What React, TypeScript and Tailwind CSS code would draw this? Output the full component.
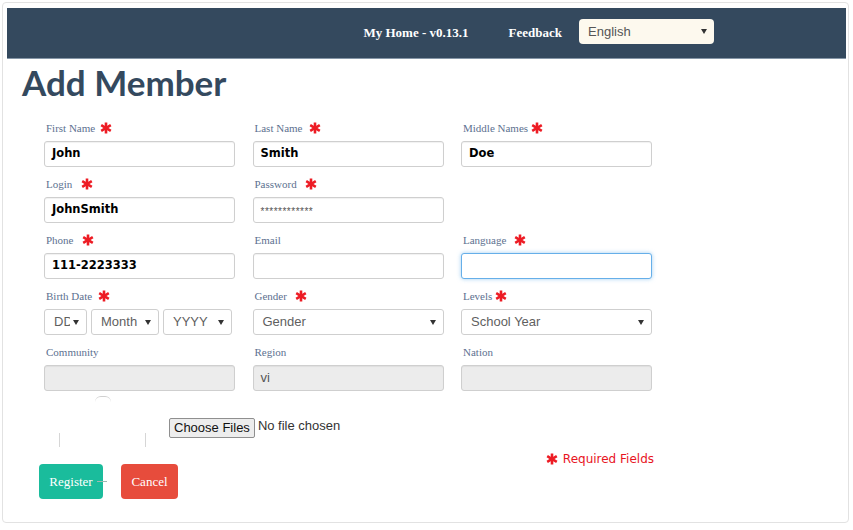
import React from 'react';

const serif = { fontFamily: '"Liberation Serif", serif' };

function Star({ className = '' }: { className?: string }) {
  return (
    <svg viewBox="0 0 12 12" className={`inline-block w-[12px] h-[12px] ${className}`}>
      <g stroke="#ed1c24" strokeWidth="2.6" strokeLinecap="butt">
        <line x1="6" y1="0.5" x2="6" y2="11.5" />
        <line x1="1.2" y1="3.2" x2="10.8" y2="8.8" />
        <line x1="1.2" y1="8.8" x2="10.8" y2="3.2" />
      </g>
    </svg>
  );
}

function Caret() {
  return (
    <svg viewBox="0 0 6 5" className="w-[6px] h-[5px] shrink-0">
      <path d="M0 0 L6 0 L3 5 Z" fill="#333" />
    </svg>
  );
}

function Label({ text, required, gap = 'ml-[5px]' }: { text: string; required?: boolean; gap?: string }) {
  return (
    <div className="h-[14px] mb-[6px] pl-[2px] flex items-center text-[11px] leading-[14px] text-[#5d7190]" style={serif}>
      <span>{text}</span>
      {required && <Star className={gap} />}
    </div>
  );
}

function TextBox({ value = '', bold = true, focused = false, disabled = false, small = false }: {
  value?: string; bold?: boolean; focused?: boolean; disabled?: boolean; small?: boolean;
}) {
  const border = focused
    ? 'border-[#66afe9] shadow-[0_0_4px_rgba(102,175,233,0.6)]'
    : 'border-[#cfcfcf] shadow-[inset_0_1px_1px_rgba(0,0,0,0.06)]';
  const bg = disabled ? 'bg-[#ececec]' : 'bg-white';
  const font = small
    ? 'text-[10px] text-[#555] tracking-[0.5px] pt-[1px] items-start'
    : bold
    ? 'text-[11.5px] font-bold text-black items-center'
    : 'text-[13px] text-[#555] items-center';
  return (
    <div
      className={`h-[26px] w-full rounded-[3px] border ${border} ${bg} px-[7px] flex ${font}`}
      style={{ fontFamily: bold && !small ? '"DejaVu Sans", sans-serif' : '"Liberation Sans", sans-serif' }}
    >
      {small ? <span className="mt-[5px]">{value}</span> : value}
    </div>
  );
}

function SelectBox({ value, width = 'w-full', clip }: { value: string; width?: string; clip?: string }) {
  return (
    <div
      className={`h-[26px] ${width} rounded-[3px] border border-[#cfcfcf] bg-white pl-[9px] pr-[7px] flex items-center justify-between text-[13px] text-[#5f5f5f]`}
      style={{ fontFamily: '"Liberation Sans", sans-serif' }}
    >
      <span className={clip ? `${clip} overflow-hidden whitespace-nowrap` : ''}>{value}</span>
      <Caret />
    </div>
  );
}

export default function App() {
  return (
    <div className="w-[853px] h-[530px] bg-white pt-[2px] pl-[2px]">
      <div className="w-[847px] h-[521px] border border-[#e2e2e2] rounded-[4px] pt-[5px] pl-[4px] pr-[2px]">
        {/* Header */}
        <div className="h-[51px] bg-[#34495e] border-b border-[#8596a7] flex items-center justify-end pr-[132px]">
          <span className="text-white font-bold text-[13px]" style={serif}>My Home - v0.13.1</span>
          <span className="text-white font-bold text-[13px] ml-[40px]" style={serif}>Feedback</span>
          <div
            className="ml-[17px] w-[135px] h-[25px] mb-[3px] rounded-[4px] bg-[#fdf9ee] flex items-center justify-between pl-[9px] pr-[7px] text-[13px] text-[#555]"
            style={{ fontFamily: '"Liberation Sans", sans-serif' }}
          >
            <span>English</span>
            <Caret />
          </div>
        </div>

        {/* Title */}
        <h1
          className="pl-[15px] mt-[3px] text-[35px] leading-[40px] font-bold text-[#34495e]"
          style={{ fontFamily: 'Lato, sans-serif' }}
        >
          Add Member
        </h1>

        {/* Form */}
        <div className="pl-[37px] mt-[19px]">
          <div className="grid grid-cols-[191px_191px_191px] gap-x-[17.5px] gap-y-[10px]">
            <div>
              <Label text="First Name" required />
              <TextBox value="John" />
            </div>
            <div>
              <Label text="Last Name" required gap="ml-[7px]" />
              <TextBox value="Smith" />
            </div>
            <div>
              <Label text="Middle Names" required gap="ml-[3px]" />
              <TextBox value="Doe" />
            </div>

            <div>
              <Label text="Login" required gap="ml-[9px]" />
              <TextBox value="JohnSmith" />
            </div>
            <div>
              <Label text="Password" required gap="ml-[8px]" />
              <TextBox value="************" small />
            </div>
            <div />

            <div>
              <Label text="Phone" required gap="ml-[8px]" />
              <TextBox value="111-2223333" />
            </div>
            <div>
              <Label text="Email" />
              <TextBox />
            </div>
            <div>
              <Label text="Language" required gap="ml-[8px]" />
              <TextBox focused />
            </div>

            <div>
              <Label text="Birth Date" required gap="ml-[6px]" />
              <div className="flex gap-[4px]">
                <SelectBox value="DD" width="w-[43px]" clip="w-[16px]" />
                <SelectBox value="Month" width="w-[68px]" />
                <SelectBox value="YYYY" width="w-[69px]" />
              </div>
            </div>
            <div>
              <Label text="Gender" required gap="ml-[8px]" />
              <SelectBox value="Gender" />
            </div>
            <div>
              <Label text="Levels" required gap="ml-[3px]" />
              <SelectBox value="School Year" />
            </div>

            <div>
              <Label text="Community" />
              <TextBox disabled />
            </div>
            <div>
              <Label text="Region" />
              <TextBox value="vi" bold={false} disabled />
            </div>
            <div>
              <Label text="Nation" />
              <TextBox disabled />
            </div>
          </div>

          {/* Upload area */}
          <div className="flex items-start mt-[5px] h-[56px]">
            <div className="relative w-[125px] h-[56px]">
              <div className="absolute left-[51px] top-0 w-[16px] h-[6px] rounded-t-full border-t border-[#d0d0d0]" />
              <div className="absolute left-[15px] top-[37px] w-[87px] h-[14px] border-l border-r border-[#d6d6d6]" />
            </div>
            <div className="flex items-start mt-[22px]" style={{ fontFamily: '"Liberation Sans", sans-serif' }}>
              <div className="h-[20px] px-[4px] rounded-[2px] border border-[#8f8f8f] bg-[#ededed] text-[13px] text-[#111] flex items-center">
                Choose Files
              </div>
              <span className="ml-[3px] -mt-[2px] text-[13px] text-[#333]">No file chosen</span>
            </div>
          </div>

          {/* Required fields note */}
          <div className="w-[610px] flex justify-end items-center text-[12px] text-[#e8141e] leading-[14px]" style={{ fontFamily: '"DejaVu Sans", sans-serif' }}>
            <Star className="mr-[5px]" />
            <span>Required Fields</span>
          </div>

          {/* Buttons */}
          <div className="flex gap-[18px] mt-[-2px] -ml-[5px]">
            <div className="relative w-[64px] h-[35px] rounded-[4px] bg-[#1abc9c] text-white text-[13px] flex items-center justify-center" style={serif}>
              Register
              <div className="absolute left-[58px] top-[17px] w-[10px] h-px bg-[#9fb9b2]" />
            </div>
            <div className="w-[57px] h-[35px] rounded-[4px] bg-[#e74c3c] text-white text-[13px] flex items-center justify-center" style={serif}>
              Cancel
            </div>
          </div>
        </div>
      </div>
    </div>
  );
}
